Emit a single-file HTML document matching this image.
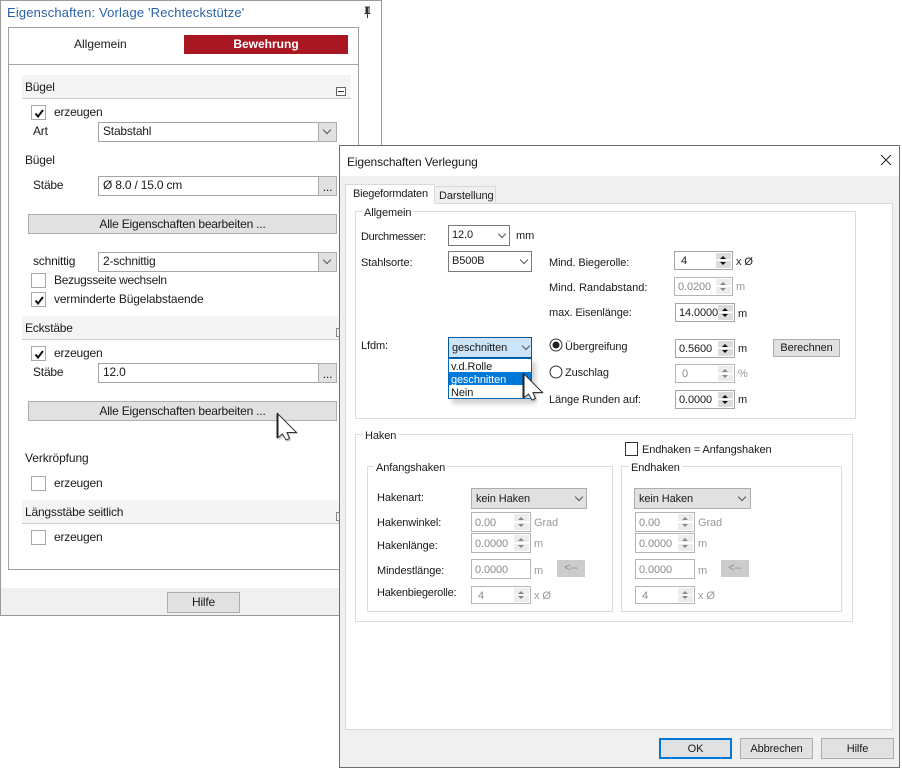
<!DOCTYPE html>
<html><head><meta charset="utf-8"><style>
html,body{margin:0;padding:0;background:#fff}
body{width:902px;height:768px;position:relative;overflow:hidden;font:12px/14px "Liberation Sans",sans-serif;color:#1a1a1a;letter-spacing:-.2px}
div,span,svg{position:absolute;box-sizing:border-box}
span{white-space:nowrap}
#r{left:0;top:0;width:902px;height:768px;font-size:11px;letter-spacing:-.1px}
#r span{margin-top:1px}
#r .sp{padding-top:1px}
.b{background:#e1e1e1;border:1px solid #adadad;text-align:center;white-space:nowrap}
.in{background:#fff;border:1px solid #a5a5a5;padding-left:4px;line-height:17px;white-space:nowrap;overflow:hidden}
.cb{width:15px;height:15px;background:#fff;border:1px solid #a8a8a8}
.cb svg{left:1px;top:1px}
.sec{left:22px;width:329px;height:24px;background:#f4f4f4;border-bottom:1px solid #ccc}
.ch{width:6px;height:6px;border-right:1px solid #555;border-bottom:1px solid #555;transform:rotate(45deg)}
.gr{border:1px solid #dcdcdc}
.lg{background:#fff;padding:0 2px}
.sp{background:#fff;border:1px solid #a5a5a5;line-height:18px;padding-left:3px;overflow:hidden;white-space:nowrap}
.sp i{position:absolute;right:1px;top:1px;bottom:1px;width:15px;background:linear-gradient(#dcdcdc 0,#dcdcdc 45%,#fff 45%,#fff 55%,#dcdcdc 55%)}
.sp i:before,.sp i:after{content:"";position:absolute;left:4px;width:0;height:0;border-left:3.500px solid transparent;border-right:3.500px solid transparent}
.sp i:before{top:3px;border-bottom:3px solid #111}
.sp i:after{bottom:3px;border-top:3px solid #111}
.d{color:#8a8a8a}
.d.sp{border-color:#b5b5b5}
.d.sp i{background:linear-gradient(#ececec 0,#ececec 45%,#fff 45%,#fff 55%,#ececec 55%)}
.d.sp i:before{border-bottom-color:#888}
.d.sp i:after{border-top-color:#888}
.u{color:#999}
</style></head><body>

<!-- LEFT WINDOW -->
<div style="left:0;top:0;width:382px;height:616px;background:#fff;border:1px solid #9a9a9a"></div>
<span style="left:7px;top:6px;font-size:13px;color:#2a62a8;letter-spacing:.16px">Eigenschaften: Vorlage 'Rechteckstütze'</span>
<svg style="left:362px;top:6px" width="11" height="13" viewBox="0 0 11 13"><path d="M3 1h5M4 1v6M7 1v6M2.500 7.500h6M5.500 8v4" fill="none" stroke="#333" stroke-width="1"/><rect x="4" y="1" width="2" height="6" fill="#333"/></svg>
<div style="left:8px;top:27px;width:351px;height:543px;background:#fff;border:1px solid #a0a0a0"></div>
<div style="left:9px;top:64px;width:349px;height:1px;background:#a8a8a8"></div>
<span style="left:74px;top:37px;letter-spacing:0">Allgemein</span>
<div style="left:184px;top:35px;width:164px;height:19px;background:#a91723;color:#fff;font-weight:bold;text-align:center;line-height:18px;letter-spacing:0">Bewehrung</div>

<div class="sec" style="top:75px"></div>
<span style="left:25px;top:80px">Bügel</span>
<div style="left:336px;top:87px;width:10px;height:9px;border:1px solid #666;background:#fff"></div>
<div style="left:338px;top:91px;width:6px;height:1px;background:#333"></div>

<div class="cb" style="left:31px;top:105px"><svg width="13" height="13" viewBox="0 0 13 13"><path d="M2.500 6.500L5 9.500L10 3" fill="none" stroke="#111" stroke-width="2"/></svg></div>
<span style="left:54px;top:105px">erzeugen</span>
<span style="left:33px;top:124px">Art</span>
<div class="in" style="left:98px;top:122px;width:239px;height:20px">Stabstahl</div>
<div class="b" style="left:318px;top:122px;width:19px;height:20px"></div>
<div class="ch" style="left:324px;top:127px"></div>
<span style="left:25px;top:153px">Bügel</span>
<span style="left:33px;top:178px">Stäbe</span>
<div class="in" style="left:98px;top:176px;width:221px;height:20px">Ø 8.0 / 15.0 cm</div>
<div class="b" style="left:318px;top:176px;width:19px;height:20px;line-height:20px">...</div>
<div class="b" style="left:28px;top:214px;width:309px;height:20px;line-height:18px">Alle Eigenschaften bearbeiten ...</div>
<span style="left:33px;top:254px">schnittig</span>
<div class="in" style="left:98px;top:252px;width:239px;height:20px">2-schnittig</div>
<div class="b" style="left:318px;top:252px;width:19px;height:20px"></div>
<div class="ch" style="left:324px;top:257px"></div>
<div class="cb" style="left:31px;top:273px"></div>
<span style="left:54px;top:273px;letter-spacing:-.3px">Bezugsseite wechseln</span>
<div class="cb" style="left:31px;top:292px"><svg width="13" height="13" viewBox="0 0 13 13"><path d="M2.500 6.500L5 9.500L10 3" fill="none" stroke="#111" stroke-width="2"/></svg></div>
<span style="left:54px;top:292px;letter-spacing:-.15px">verminderte Bügelabstaende</span>

<div class="sec" style="top:316px"></div>
<span style="left:25px;top:321px">Eckstäbe</span>
<div style="left:336px;top:328px;width:4px;height:9px;border:1px solid #888;border-right:0"></div>
<div class="cb" style="left:31px;top:346px"><svg width="13" height="13" viewBox="0 0 13 13"><path d="M2.500 6.500L5 9.500L10 3" fill="none" stroke="#111" stroke-width="2"/></svg></div>
<span style="left:54px;top:346px">erzeugen</span>
<span style="left:33px;top:365px">Stäbe</span>
<div class="in" style="left:98px;top:363px;width:221px;height:20px">12.0</div>
<div class="b" style="left:318px;top:363px;width:19px;height:20px;line-height:20px">...</div>
<div class="b" style="left:28px;top:401px;width:309px;height:20px;line-height:18px">Alle Eigenschaften bearbeiten ...</div>
<span style="left:25px;top:451px;letter-spacing:-.1px">Verkröpfung</span>
<div class="cb" style="left:31px;top:476px"></div>
<span style="left:54px;top:476px">erzeugen</span>
<div class="sec" style="top:500px"></div>
<span style="left:25px;top:505px">Längsstäbe seitlich</span>
<div style="left:336px;top:512px;width:4px;height:9px;border:1px solid #888;border-right:0"></div>
<div class="cb" style="left:31px;top:530px"></div>
<span style="left:54px;top:530px">erzeugen</span>

<div style="left:1px;top:588px;width:380px;height:27px;background:#f0f0f0"></div>
<div class="b" style="left:167px;top:592px;width:73px;height:21px;line-height:19px">Hilfe</div>

<svg style="left:275px;top:411px" width="26" height="33" viewBox="0 0 26 33">
<path d="M4 4V29L9 25L12.500 31L16 29.500L14 23H23Z" fill="#999" opacity=".5"/>
<path d="M2.500 2.500V27L7.500 23L11 29L14.500 27.500L12 21.500H21.500Z" fill="#fff" stroke="#333" stroke-width="1"/>
<path d="M2.500 2.500V27" stroke="#222" stroke-width="2"/>
</svg>

<!-- RIGHT DIALOG -->
<div id="r">
<div style="left:339px;top:145px;width:561px;height:623px;background:#f0f0f0;border:1px solid #6e6e6e"></div>
<div style="left:340px;top:146px;width:559px;height:30px;background:#fff"></div>
<span style="left:347px;top:154px;font-size:12px;letter-spacing:-.12px">Eigenschaften Verlegung</span>
<svg style="left:880px;top:154px" width="12" height="12" viewBox="0 0 12 12"><path d="M1 1L11 11M11 1L1 11" stroke="#222" stroke-width="1" fill="none"/></svg>

<div style="left:345px;top:203px;width:548px;height:527px;background:#fff;border:1px solid #d9d9d9"></div>
<div style="left:434px;top:186px;width:62px;height:18px;background:#f0f0f0;border:1px solid #d9d9d9"></div>
<span style="left:439px;top:188px">Darstellung</span>
<div style="left:345px;top:184px;width:90px;height:20px;background:#fff;border:1px solid #d9d9d9;border-bottom:0"></div>
<span style="left:353px;top:186px;letter-spacing:-.2px">Biegeformdaten</span>

<div class="gr" style="left:355px;top:211px;width:501px;height:208px"></div>
<span class="lg" style="left:362px;top:205px">Allgemein</span>
<span style="left:361px;top:229px;letter-spacing:-.3px">Durchmesser:</span>
<div class="in" style="left:448px;top:225px;width:62px;height:21px;border-color:#7a7a7a;line-height:18px;padding-left:3px">12.0</div>
<div class="ch" style="left:499px;top:231px"></div>
<span style="left:516px;top:228px">mm</span>
<span style="left:361px;top:255px">Stahlsorte:</span>
<div class="in" style="left:448px;top:251px;width:84px;height:21px;border-color:#7a7a7a;line-height:19px;padding-left:3px">B500B</div>
<div class="ch" style="left:521px;top:257px"></div>
<span style="left:549px;top:255px">Mind. Biegerolle:</span>
<span style="left:549px;top:280px;letter-spacing:0">Mind. Randabstand:</span>
<span style="left:549px;top:305px">max. Eisenlänge:</span>
<div class="sp" style="left:674px;top:251px;width:59px;height:19px;padding-left:6px;line-height:17px">4<i></i></div>
<span style="left:736px;top:254px">x Ø</span>
<div class="sp d" style="left:674px;top:277px;width:59px;height:19px;line-height:17px">0.0200<i></i></div>
<span class="u" style="left:736px;top:279px">m</span>
<div class="sp" style="left:675px;top:303px;width:60px;height:19px;line-height:17px">14.0000<i></i></div>
<span style="left:738px;top:306px">m</span>

<span style="left:361px;top:338px">Lfdm:</span>
<div style="left:448px;top:337px;width:84px;height:21px;background:#cce4f7;border:1px solid #005499;padding-left:3px;line-height:20px">geschnitten</div>
<div class="ch" style="left:523px;top:343px"></div>
<div style="left:452px;top:362px;width:84px;height:42px;background:#aaa;opacity:.5;filter:blur(2px)"></div>
<div style="left:448px;top:358px;width:84px;height:41px;background:#fff;border:1px solid #0068b8"></div>
<span style="left:451px;top:359px">v.d.Rolle</span>
<div style="left:449px;top:372px;width:82px;height:13px;background:#0078d7"></div>
<span style="left:451px;top:372px;color:#fff">geschnitten</span>
<span style="left:451px;top:385px">Nein</span>
<svg style="left:521px;top:371px" width="26" height="33" viewBox="0 0 26 33">
<path d="M4 4V29L9 25L12.500 31L16 29.500L14 23H23Z" fill="#999" opacity=".5"/>
<path d="M2.500 2.500V27L7.500 23L11 29L14.500 27.500L12 21.500H21.500Z" fill="#fff" stroke="#333" stroke-width="1"/>
<path d="M2.500 2.500V27" stroke="#222" stroke-width="2"/>
</svg>

<svg style="left:549px;top:338px" width="14" height="14" viewBox="0 0 14 14"><circle cx="7" cy="7" r="6" fill="#fff" stroke="#333"/><circle cx="7" cy="7" r="3.500" fill="#222"/></svg>
<span style="left:565px;top:339px">Übergreifung</span>
<svg style="left:549px;top:365px" width="14" height="14" viewBox="0 0 14 14"><circle cx="7" cy="7" r="6" fill="#fff" stroke="#333"/></svg>
<span style="left:565px;top:365px">Zuschlag</span>
<span style="left:549px;top:392px">Länge Runden auf:</span>
<div class="sp" style="left:675px;top:339px;width:60px;height:19px;line-height:17px">0.5600<i></i></div>
<span style="left:738px;top:341px">m</span>
<div class="b" style="left:773px;top:339px;width:67px;height:18px;line-height:16px">Berechnen</div>
<div class="sp d" style="left:675px;top:364px;width:60px;height:19px;padding-left:6px;line-height:17px">0<i></i></div>
<span class="u" style="left:738px;top:366px">%</span>
<div class="sp" style="left:675px;top:390px;width:60px;height:19px;line-height:17px">0.0000<i></i></div>
<span style="left:738px;top:392px">m</span>

<div class="gr" style="left:355px;top:434px;width:498px;height:188px"></div>
<span class="lg" style="left:363px;top:428px">Haken</span>
<div class="gr" style="left:367px;top:466px;width:246px;height:146px"></div>
<span class="lg" style="left:374px;top:460px">Anfangshaken</span>
<div class="gr" style="left:621px;top:466px;width:221px;height:146px"></div>
<span class="lg" style="left:629px;top:460px">Endhaken</span>
<div class="cb" style="left:625px;top:442px;border-color:#333;width:13px;height:14px"></div>
<span style="left:642px;top:442px">Endhaken = Anfangshaken</span>

<span style="left:377px;top:490px">Hakenart:</span>
<span style="left:377px;top:515px">Hakenwinkel:</span>
<span style="left:377px;top:538px">Hakenlänge:</span>
<span style="left:377px;top:563px">Mindestlänge:</span>
<span style="left:377px;top:585px;letter-spacing:-.2px">Hakenbiegerolle:</span>

<div class="b" style="left:471px;top:488px;width:116px;height:21px;text-align:left;padding-left:4px;line-height:20px">kein Haken</div>
<div class="ch" style="left:576px;top:494px"></div>
<div class="sp d" style="left:471px;top:512px;width:60px;height:20px">0.00<i></i></div>
<span class="u" style="left:534px;top:515px">Grad</span>
<div class="sp d" style="left:471px;top:533px;width:60px;height:20px">0.0000<i></i></div>
<span class="u" style="left:534px;top:536px">m</span>
<div class="sp d" style="left:471px;top:559px;width:60px;height:20px">0.0000</div>
<span class="u" style="left:534px;top:563px">m</span>
<div class="b d" style="left:557px;top:560px;width:28px;height:17px;background:#ccc;border-color:#ccc;line-height:15px">&lt;--</div>
<div class="sp d" style="left:471px;top:586px;width:60px;height:18px;padding-left:6px;line-height:16px">4<i></i></div>
<span class="u" style="left:534px;top:588px">x Ø</span>

<div class="b" style="left:634px;top:488px;width:117px;height:21px;text-align:left;padding-left:4px;line-height:20px">kein Haken</div>
<div class="ch" style="left:739px;top:494px"></div>
<div class="sp d" style="left:635px;top:512px;width:60px;height:20px">0.00<i></i></div>
<span class="u" style="left:698px;top:515px">Grad</span>
<div class="sp d" style="left:635px;top:533px;width:60px;height:20px">0.0000<i></i></div>
<span class="u" style="left:698px;top:536px">m</span>
<div class="sp d" style="left:635px;top:559px;width:60px;height:20px">0.0000</div>
<span class="u" style="left:698px;top:563px">m</span>
<div class="b d" style="left:721px;top:560px;width:28px;height:17px;background:#ccc;border-color:#ccc;line-height:15px">&lt;--</div>
<div class="sp d" style="left:635px;top:586px;width:60px;height:18px;padding-left:6px;line-height:16px">4<i></i></div>
<span class="u" style="left:698px;top:588px">x Ø</span>

<div class="b" style="left:659px;top:738px;width:73px;height:21px;border:2px solid #0078d7;line-height:19px">OK</div>
<div class="b" style="left:740px;top:738px;width:73px;height:21px;line-height:20px">Abbrechen</div>
<div class="b" style="left:821px;top:738px;width:73px;height:21px;line-height:20px">Hilfe</div>
</div>

</body></html>
